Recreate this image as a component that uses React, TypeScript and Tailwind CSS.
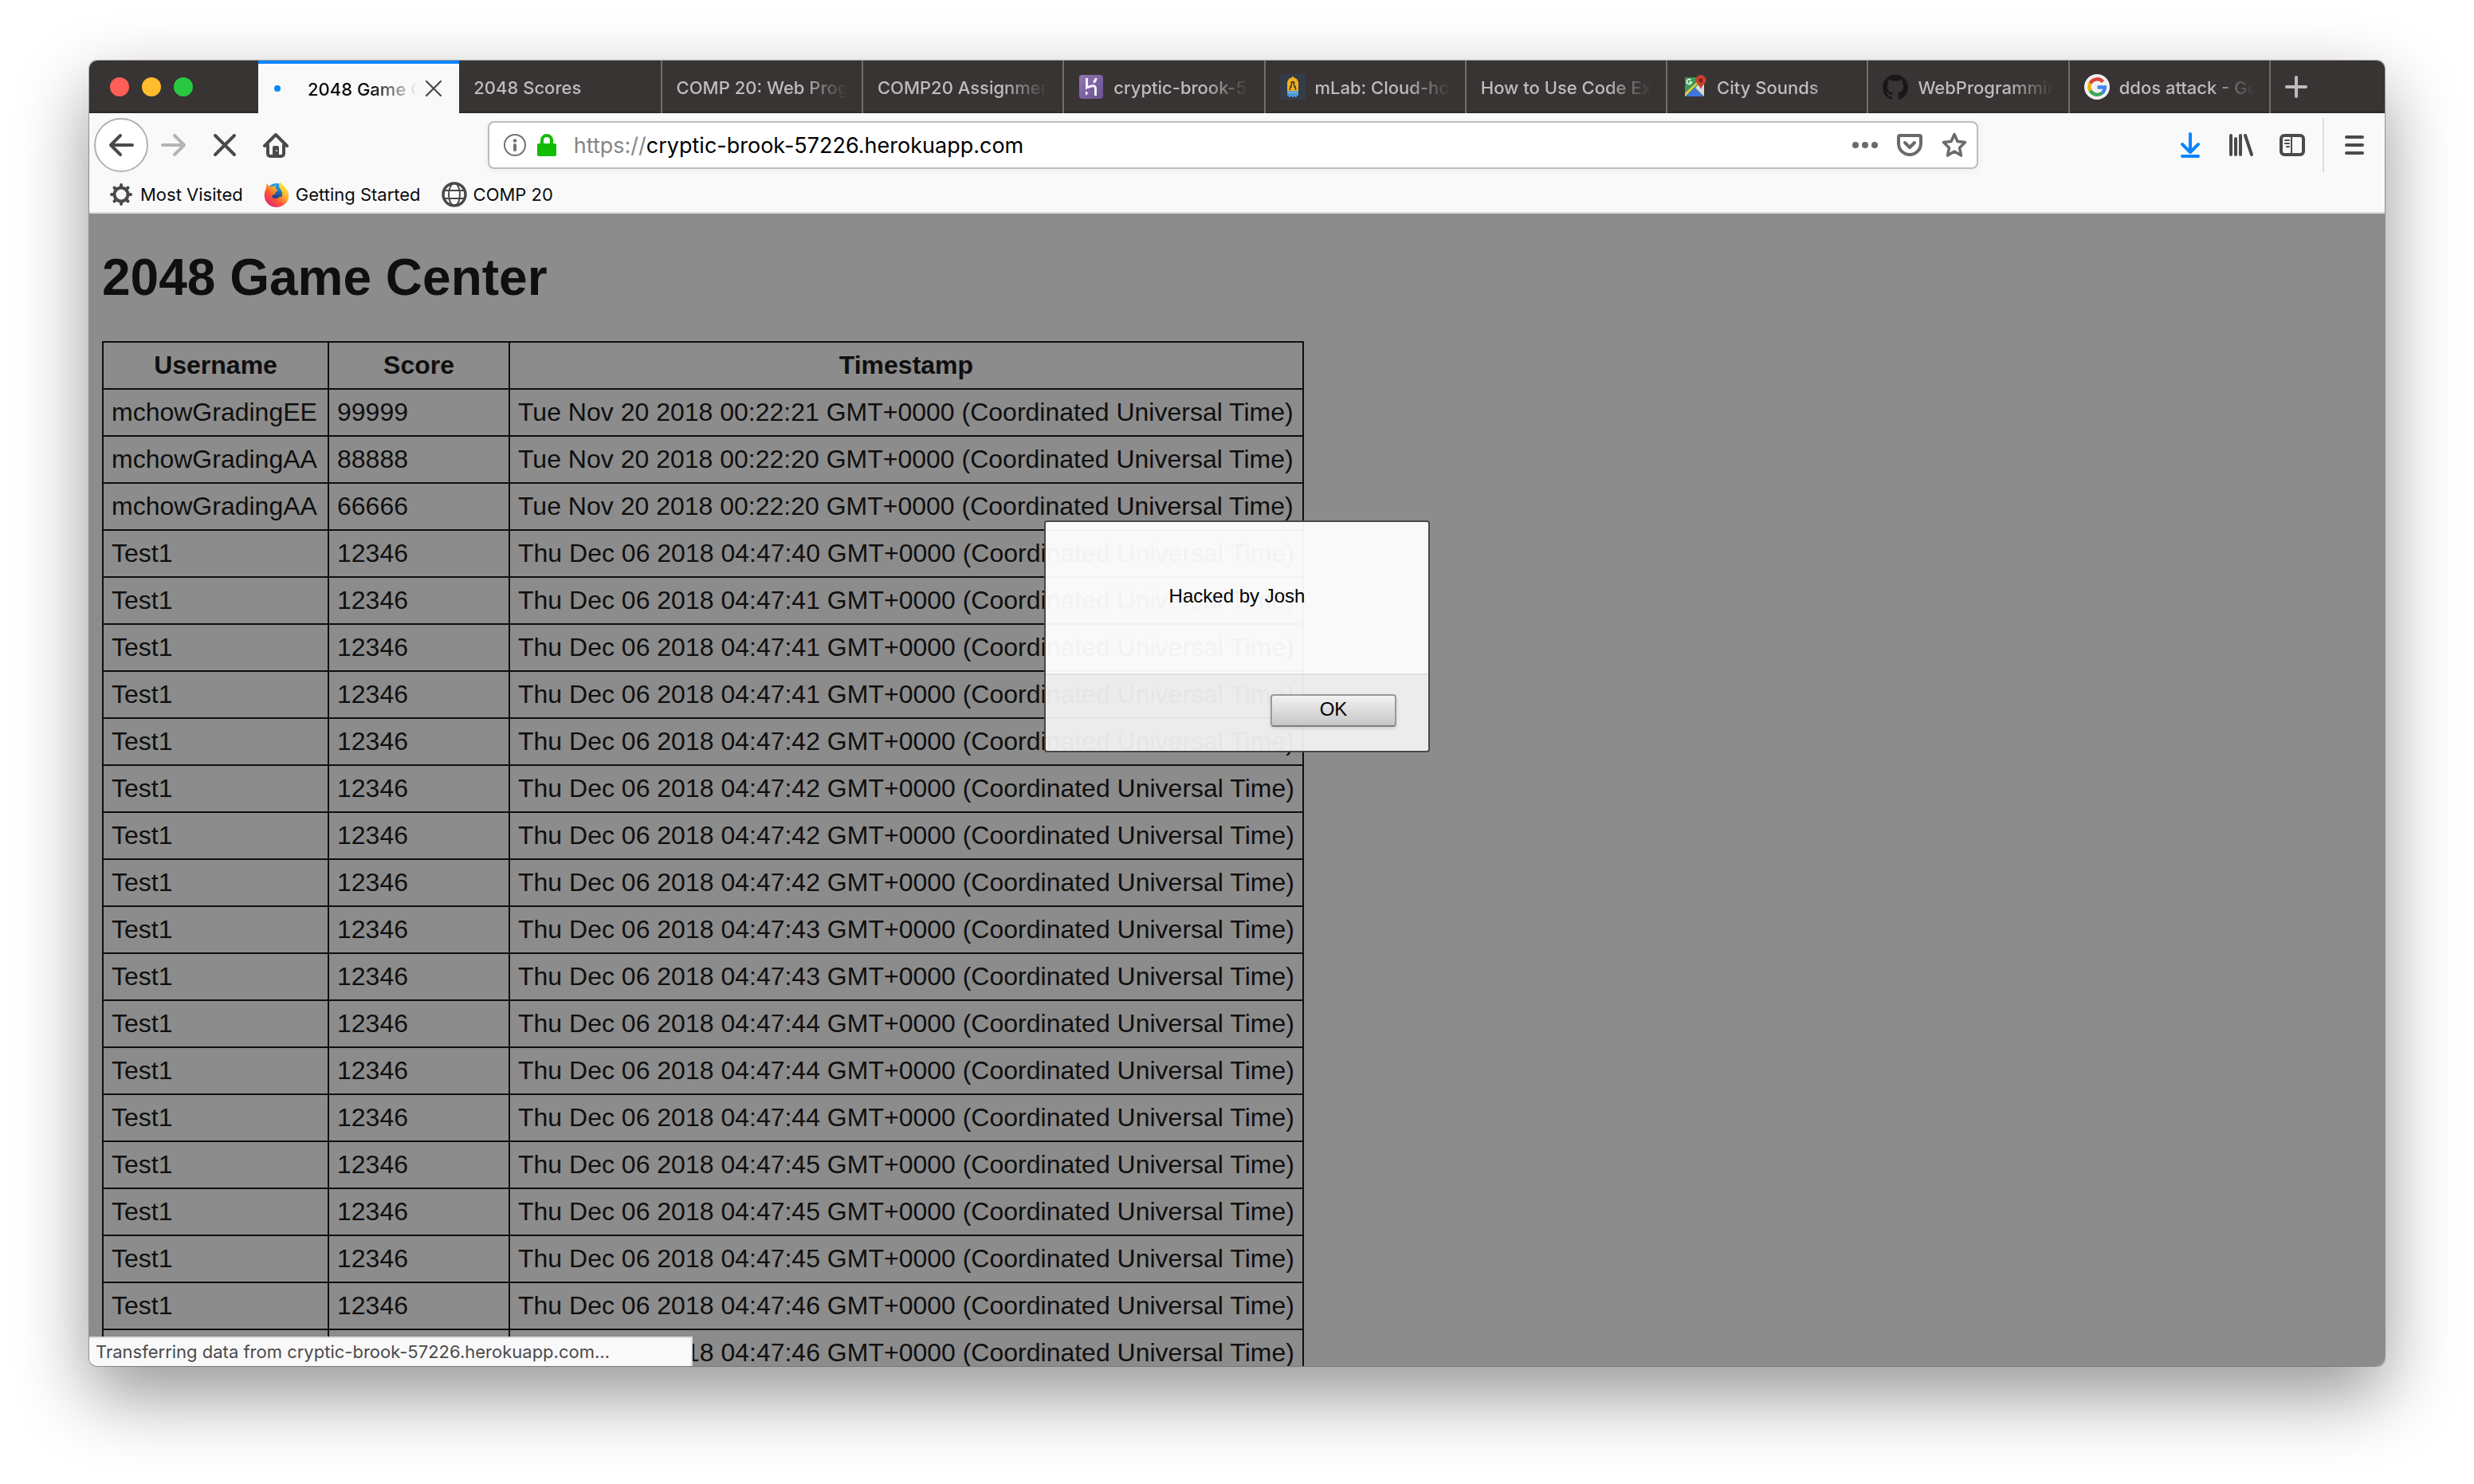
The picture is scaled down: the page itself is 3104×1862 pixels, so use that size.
import React from "react";
import { SiGithub } from "react-icons/si";

const Svg = ({ className = "size-8", children }: { className?: string; children: React.ReactNode }) => (
  <svg viewBox="0 0 32 32" fill="none" stroke="currentColor" strokeWidth="4" strokeLinecap="round" strokeLinejoin="round" className={`shrink-0 ${className}`} aria-hidden="true">
    {children}
  </svg>
);

const BackIcon = () => <Svg><path d="M30 16H3M15 4 3 16l12 12" /></Svg>;
const ForwardIcon = () => <Svg><path d="M2 16h27M17 4l12 12-12 12" /></Svg>;
const StopIcon = () => <Svg><path d="M4 4l24 24M28 4 4 28" /></Svg>;
const HomeIcon = () => (
  <Svg>
    <path d="M2 17 16 3l14 14" />
    <path d="M6 16v11a3 3 0 0 0 3 3h14a3 3 0 0 0 3-3V16" />
    <path d="M12 29V19a2 2 0 0 1 2-2h4a2 2 0 0 1 2 2v10z" fill="currentColor" stroke="none" />
    <circle cx="17" cy="23" r="1" fill="#f9f9fa" stroke="none" />
  </Svg>
);
const InfoIcon = () => (
  <Svg className="size-8 text-[#737373]">
    <circle cx="16" cy="16" r="13" strokeWidth="2" />
    <circle cx="16" cy="10.5" r="2.3" fill="currentColor" stroke="none" />
    <path d="M16 16v6" />
  </Svg>
);
const LockIcon = () => (
  <Svg className="size-8 text-[#12bc00]">
    <path d="M10 15v-5a6 6 0 0 1 12 0v5" />
    <rect x="4" y="14" width="24" height="16" rx="2" fill="currentColor" stroke="none" />
  </Svg>
);
const DotsIcon = () => (
  <Svg>
    {[4, 16, 28].map((x) => <circle key={x} cx={x} cy="16" r="4" fill="currentColor" stroke="none" />)}
  </Svg>
);
const PocketIcon = () => (
  <Svg>
    <path d="M4 4h24a2 2 0 0 1 2 2v8a14 14 0 0 1-28 0V6a2 2 0 0 1 2-2z" />
    <path d="m10 13 6 6 6-6" />
  </Svg>
);
const StarIcon = () => (
  <Svg><path strokeWidth="3.5" d="m16 2.500 4 9 9.500 1-7 7 2 9.500-8.500-5-8.500 5 2-9.500-7-7 9.500-1z" /></Svg>
);
const DownloadIcon = () => <Svg className="size-8 text-[#0a84ff]"><path d="M16 2v22M6 15l10 10 10-10M6 30h20" /></Svg>;
const LibraryIcon = () => <Svg><path d="M3 4v24M9 8v20M15 4v24M21 4l8 24" /></Svg>;
const SidebarIcon = () => (
  <Svg>
    <rect x="2" y="4" width="28" height="24" rx="4" />
    <path d="M15 4v24" strokeWidth="2" />
    <path d="M7 10h5M7 14h5M9 18h3" strokeWidth="2" />
  </Svg>
);
const MenuIcon = () => <Svg><path d="M6 6h20M6 16h20M6 26h20" /></Svg>;
const PlusIcon = () => <Svg><path d="M16 4v24M4 16h24" strokeWidth="4" /></Svg>;
const CloseIcon = () => <Svg className="size-6"><path d="M4 4l24 24M28 4 4 28" strokeWidth="3" /></Svg>;

const GearIcon = () => (
  <Svg>
    <circle cx="16" cy="16" r="8.5" strokeWidth="4" />
    {[0, 45, 90, 135, 180, 225, 270, 315].map((a) => (
      <path key={a} d="M16 6V4" strokeWidth="4" transform={`rotate(${a} 16 16)`} />
    ))}
  </Svg>
);
const GlobeIcon = () => (
  <Svg>
    <circle cx="16" cy="16" r="14" strokeWidth="3.5" />
    <ellipse cx="16" cy="16" rx="7" ry="14" strokeWidth="2" />
    <path d="M3 11h26M3 21h26" strokeWidth="2" />
  </Svg>
);
const FirefoxIcon = () => (
  <svg viewBox="0 0 32 32" className="size-8 shrink-0" aria-hidden="true">
    <defs>
      <linearGradient id="fox" x1="28" y1="4" x2="6" y2="29" gradientUnits="userSpaceOnUse">
        <stop offset="0" stopColor="#fff04a" />
        <stop offset=".35" stopColor="#ffb42c" />
        <stop offset=".65" stopColor="#ff5a36" />
        <stop offset="1" stopColor="#e3266e" />
      </linearGradient>
      <linearGradient id="orb" x1="20" y1="3" x2="14" y2="24" gradientUnits="userSpaceOnUse">
        <stop offset="0" stopColor="#1fa8f4" />
        <stop offset="1" stopColor="#20286f" />
      </linearGradient>
    </defs>
    <circle cx="16" cy="15" r="13" fill="url(#orb)" />
    <path fill="url(#fox)" d="M21 0c1 4 5 5 7.500 9C33 17 31 23 27 27.500c-6 6-17 6-22.500-.5C-.5 21.500 0 14 3 8l.5-6 3.500 4.500c2-1 4-1 5.500-.5L15 4c-.5 2 -.5 4 .5 5.500l2 .8c-.2 1.600-2.500 2-3 3.200-.3 1.200.3 2-1 2.500-1.500.6-3 .5-3.500 2 1.500 4.500 7 3.500 9 1.500 1.500-1.500 3-.5 2.500.5 1.500-1.500 2.500-5 .5-8.500-1-2.500-3-3.500-3-6.500 0-2 .7-3.700 2-5z" />
  </svg>
);
const HerokuIcon = () => (
  <span className="flex size-8 shrink-0 items-center justify-center">
    <svg viewBox="0 0 30 30" className="size-[30px] rounded-sm bg-linear-to-br from-[#9377b4] to-[#69508e]" fill="none" stroke="#f3f0f7" strokeWidth="3" aria-hidden="true">
      <path d="M9.500 4v12c4-2 11-4.500 11 1v9M21 4c0 2-1 4-3 5.500" />
      <path d="m8 20 3.500 3L8 26z" fill="#f3f0f7" stroke="none" />
    </svg>
  </span>
);
const MlabIcon = () => (
  <svg viewBox="0 0 32 32" className="size-8 shrink-0" aria-hidden="true">
    <path d="M0 0h32v32H0z" fill="#343d47" />
    <path d="M9 21V10l2-4 4-2V3h2v1l4 2 2 4v11z" fill="#f2b01e" />
    <path d="M12.500 20v-3M13.500 17l1-4V9M19.500 20v-3M18.500 17l-1-4V9M12 16h2.500M17.500 16H20M14 10h4" stroke="#33302c" strokeWidth="1.500" fill="none" />
    <path d="M9 21h14v6h-2v2h-2v-1h-2v1h-2v-1h-2v1h-2v-2H9z" fill="#4f9ad8" />
    <path d="M10 23h12" stroke="#8fc3ec" />
  </svg>
);
const MapsIcon = () => (
  <svg viewBox="0 0 32 32" className="size-8 shrink-0" aria-hidden="true">
    <path d="M4 4h22v24H4z" fill="#3c9a57" />
    <path d="m5 28 11-11 11 11z" fill="#4274e0" />
    <path d="M28 28 17 17l7-7 4 2z" fill="#d9d9dc" />
    <path d="m4 28 16-16v-3L4 24z" fill="#f4cd45" />
    <path d="M24 1a6.500 6.500 0 0 1 6.500 6.500C30.500 12 26 13 24 19c-2-6-6.500-7-6.500-11.500A6.500 6.500 0 0 1 24 1z" fill="#c8402f" />
    <circle cx="24" cy="8" r="2.4" fill="#70201a" />
    <path d="M11.500 7.500a3 3 0 1 0 .8 2.500H9.500" fill="none" stroke="#fff" strokeWidth="1.5" />
  </svg>
);
const GoogleIcon = () => (
  <svg viewBox="0 0 32 32" className="size-8 shrink-0" fill="none" strokeWidth="4.5" aria-hidden="true">
    <circle cx="16" cy="16" r="16" fill="#f1f1f1" />
    <path d="M23.500 9.500A10 10 0 0 0 7.500 11.500" stroke="#db4437" />
    <path d="M7.500 11.500a10 10 0 0 0 0 9" stroke="#f0b400" />
    <path d="M7.500 20.500a10 10 0 0 0 14.800 3.300" stroke="#3aa757" />
    <path d="M22.300 23.800A10 10 0 0 0 25.800 16.500H16.500" stroke="#4285f4" />
  </svg>
);
const GithubIcon = () => <SiGithub className="size-8 shrink-0 text-[#191717]" aria-hidden="true" />;

type Tab = { title: string; Icon?: React.FC };
const tabs: Tab[] = [
  { title: "2048 Scores" },
  { title: "COMP 20: Web Programming" },
  { title: "COMP20 Assignment 3" },
  { title: "cryptic-brook-57226", Icon: HerokuIcon },
  { title: "mLab: Cloud-hosted", Icon: MlabIcon },
  { title: "How to Use Code Examples" },
  { title: "City Sounds", Icon: MapsIcon },
  { title: "WebProgramming", Icon: GithubIcon },
  { title: "ddos attack - Google", Icon: GoogleIcon },
];

const fade = "min-w-0 flex-1 overflow-hidden pt-0.5 text-left whitespace-nowrap [mask-image:linear-gradient(to_left,transparent,black_56px)]";

const TabStrip = () => (
  <div className="flex h-[66px] bg-[#383433] text-[22px] font-medium text-[#bebcbc] shadow-[inset_0_-2px_0_#2a2626]">
    <div className="flex w-[212px] shrink-0 items-center gap-4 pl-[26px]">
      <button aria-label="Close window" className="size-6 rounded-full bg-[#ff5f57]" />
      <button aria-label="Minimize window" className="size-6 rounded-full bg-[#ffbd2e]" />
      <button aria-label="Zoom window" className="size-6 rounded-full bg-[#28c940]" />
    </div>
    <div role="tablist" className="grid min-w-0 flex-1 grid-cols-10">
      <div role="tab" aria-selected="true" className="flex min-w-0 items-center border-t-4 border-[#0a84ff] bg-[#f9f9fa] pr-5 pl-5 text-[#0c0c0d]">
        <span className="mr-[34px] size-2 shrink-0 rounded-full bg-[#0a84ff]" />
        <span className={fade}>2048 Game Center</span>
        <button aria-label="Close tab" className="ml-2 text-[#4a4a4b]"><CloseIcon /></button>
      </div>
      {tabs.map(({ title, Icon }, i) => (
        <button key={title} role="tab" aria-selected="false" className={`flex min-w-0 items-center gap-3 px-[18px] ${i ? "border-l-2 border-[#716e6e]" : ""}`}>
          {Icon && <Icon />}
          <span className={fade}>{title}</span>
        </button>
      ))}
    </div>
    <button aria-label="New tab" className="flex w-[145px] shrink-0 items-center border-l-2 border-[#716e6e] pl-4"><PlusIcon /></button>
  </div>
);

const ToolButton = ({ label, className = "text-[#4a4a4b]", children }: { label: string; className?: string; children: React.ReactNode }) => (
  <button aria-label={label} className={`flex h-16 w-16 shrink-0 items-center justify-center ${className}`}>{children}</button>
);

const Toolbar = () => (
  <div className="flex h-20 items-center px-1.5">
    <button aria-label="Back" className="flex size-[68px] shrink-0 items-center justify-center rounded-full border-2 border-[#b1b1b1] bg-white text-[#4a4a4b]"><BackIcon /></button>
    <ToolButton label="Forward" className="text-[#b4b4b5]"><ForwardIcon /></ToolButton>
    <ToolButton label="Stop"><StopIcon /></ToolButton>
    <ToolButton label="Home"><HomeIcon /></ToolButton>
    <div className="flex-1" />
    <div className="min-w-0 flex-[8]">
      <div className="flex h-[60px] items-center rounded-lg border-2 border-[#bdbdbd] bg-white pr-3 pl-4 text-[#6a6a6b] shadow-[0_2px_8px_rgba(0,0,0,0.06)]">
        <InfoIcon />
        <span className="ml-2 flex"><LockIcon /></span>
        <label className="ml-[18px] flex min-w-0 flex-1 items-center pt-0.5 text-[27px] leading-9">
          <span className="text-[#858585]">https://</span>
          <input aria-label="Address" defaultValue="cryptic-brook-57226.herokuapp.com" className="min-w-0 flex-1 bg-transparent text-black outline-none" />
        </label>
        <div className="flex gap-6">
          <button aria-label="Page actions"><DotsIcon /></button>
          <button aria-label="Save to Pocket"><PocketIcon /></button>
          <button aria-label="Bookmark"><StarIcon /></button>
        </div>
      </div>
    </div>
    <div className="flex-1" />
    <ToolButton label="Downloads"><DownloadIcon /></ToolButton>
    <ToolButton label="Library"><LibraryIcon /></ToolButton>
    <ToolButton label="Sidebar"><SidebarIcon /></ToolButton>
    <div className="mx-1.5 h-[68px] w-0.5 shrink-0 bg-[#dcdcdc]" />
    <ToolButton label="Menu"><MenuIcon /></ToolButton>
  </div>
);

const Bookmarks = () => (
  <nav className="flex h-[46px] items-center gap-[26px] border-b-2 border-[#dedede] px-6 text-[22px] leading-8 text-[#0c0c0d]">
    <a href="#visited" className="flex gap-2"><span className="text-[#4a4a4b]"><GearIcon /></span>Most Visited</a>
    <a href="#start" className="flex gap-2"><FirefoxIcon />Getting Started</a>
    <a href="#comp20" className="flex gap-2"><span className="text-[#4a4a4b]"><GlobeIcon /></span>COMP 20</a>
  </nav>
);

const seconds = [40, 41, 41, 41, 42, 42, 42, 42, 43, 43, 44, 44, 44, 45, 45, 45, 46, 46];
const rows: [string, number, string][] = [
  ["mchowGradingEE", 99999, "Tue Nov 20 2018 00:22:21"],
  ["mchowGradingAA", 88888, "Tue Nov 20 2018 00:22:20"],
  ["mchowGradingAA", 66666, "Tue Nov 20 2018 00:22:20"],
  ...seconds.map((s): [string, number, string] => ["Test1", 12346, `Thu Dec 06 2018 04:47:${s}`]),
];

const cell = "border-2 border-[#0f0f0f] p-2.5";

const ScorePage = () => (
  <main className="min-h-0 flex-1 overflow-hidden bg-[#8c8c8c] px-4 text-[#0f0f0f] [font-family:'Liberation_Sans',Arial,sans-serif]">
    <h1 className="my-[43px] text-[64px] leading-[74px] font-bold">2048 Game Center</h1>
    <table className="border-collapse text-[32px] leading-[37px] whitespace-nowrap">
      <thead>
        <tr>
          <th scope="col" className={`${cell} w-[283px]`}>Username</th>
          <th scope="col" className={`${cell} w-[227px]`}>Score</th>
          <th scope="col" className={cell}>Timestamp</th>
        </tr>
      </thead>
      <tbody>
        {rows.map(([user, score, time], i) => (
          <tr key={i}>
            <td className={cell}>{user}</td>
            <td className={cell}>{score}</td>
            <td className={cell}>{time} GMT+0000 (Coordinated Universal Time)</td>
          </tr>
        ))}
      </tbody>
    </table>
  </main>
);

const Alert = () => (
  <div role="alertdialog" aria-labelledby="alert-text" className="absolute top-[577px] left-1/2 w-[484px] -translate-x-1/2 rounded-sm border-2 border-[#484848] bg-white/95 text-2xl text-black [font-family:'Liberation_Sans',Arial,sans-serif]">
    <p id="alert-text" className="flex h-[190px] items-center justify-center pb-1">Hacked by Josh</p>
    <div className="flex h-[97px] items-start justify-end border-t-2 border-black/5 bg-black/5 px-10 pt-6">
      <button className="h-[41px] w-[158px] rounded-sm border-2 border-[#9a9a9a] border-b-[#7d7d7d] bg-linear-to-b from-[#f2f2f2] to-[#c6c6c6] pb-1 leading-8 shadow-[0_2px_4px_rgba(0,0,0,0.12)]">OK</button>
    </div>
  </div>
);

export default function App() {
  return (
    <div className="flex h-screen flex-col bg-white px-28 pt-[76px] pb-[148px] [font-family:Inter,'Noto_Sans',sans-serif]">
      <div className="relative flex min-h-0 flex-1 flex-col rounded-[10px] shadow-[0_0_0_1px_rgba(0,0,0,0.3),0_36px_90px_rgba(0,0,0,0.42)]">
        <div className="flex min-h-0 flex-1 flex-col overflow-hidden rounded-[10px] bg-[#f9f9fa]">
          <TabStrip />
          <Toolbar />
          <Bookmarks />
          <ScorePage />
        </div>
        <Alert />
        <div role="status" className="absolute bottom-0 left-0 h-[37px] w-[757px] rounded-bl-[10px] border-t-2 border-r-2 border-[#dcdcdc] bg-[#f9f9fa] pl-2 text-[22px] leading-[35px] text-[#4a4a4b]">
          Transferring data from cryptic-brook-57226.herokuapp.com…
        </div>
      </div>
    </div>
  );
}
